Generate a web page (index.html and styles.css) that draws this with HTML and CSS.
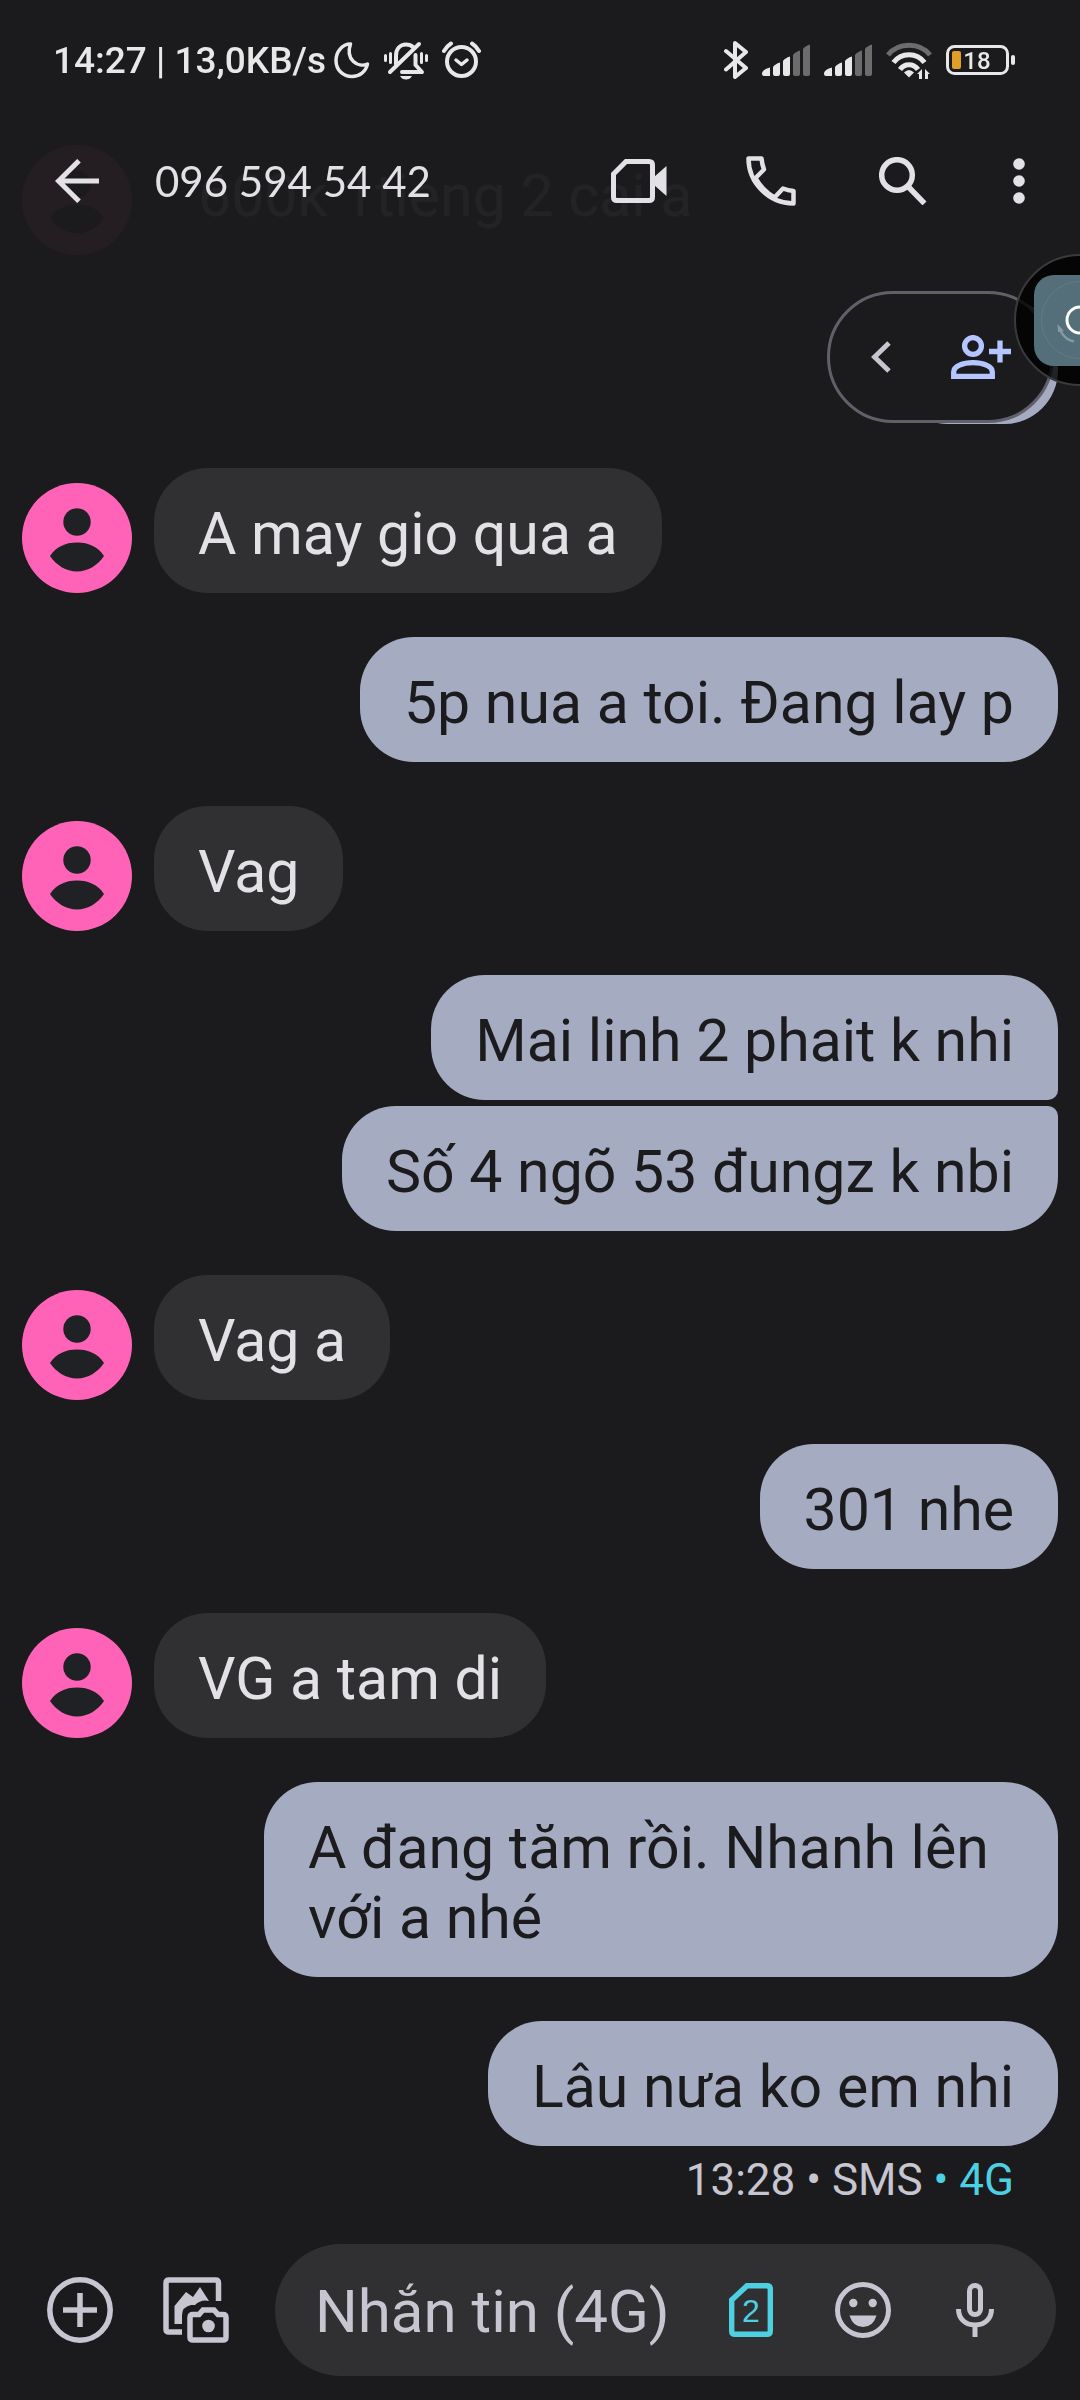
FILE: index.html
```html
<!DOCTYPE html>
<html lang="vi">
<head>
<meta charset="utf-8">
<meta name="viewport" content="width=device-width, initial-scale=1">
<title>096 594 54 42</title>
<link rel="stylesheet" href="styles.css">
</head>
<body>
<svg class="defs" aria-hidden="true">
  <symbol id="person" viewBox="0 0 110 110">
    <circle cx="55" cy="55" r="55" fill="#ff63b8"/>
    <circle cx="55" cy="39" r="13.7" fill="#202124"/>
    <path d="M28 73C34 64 43 59.500 55 59.500S76 64 82 73C76 82 66 88.500 55 88.500S34 82 28 73Z" fill="#202124"/>
  </symbol>
  <symbol id="signal" viewBox="0 0 48 40">
    <path d="M0 33q1-4 8-5.500v8.500h-6q-2 0-2-2z M11 27q2-3 7-4.500v11.500q0 2-2 2h-3q-2 0-2-2z M21 21q2-3 7-4.500v17.500q0 2-2 2h-3q-2 0-2-2z" fill="#e8e8e8"/>
    <path d="M31 15q2-3 7-4.500v23.500q0 2-2 2h-3q-2 0-2-2z M41 9q2-3 7-4.500v29.500q0 2-2 2h-3q-2 0-2-2z" fill="#6c6c6d"/>
  </symbol>
</svg>

<header class="header">
  <div class="status">
    <span class="status-text">14:27 | 13,0KB/s</span>
    <svg width="36" height="40" viewBox="0 0 36 40" fill="none" stroke="#e8e8e8" stroke-width="3.500" stroke-linejoin="round"><path d="M16.500 4C8 4 2 12 2 20.500C2 30 9 36.500 18 36.500C25.500 36.500 32 31.500 33.500 24C24 28 11 20 16.500 4Z"/></svg>
    <svg width="44" height="40" viewBox="0 0 44 40" fill="none" stroke="#e8e8e8" stroke-linecap="round"><path d="M12 24V16C12 9 16 4.500 22 4.500C25 4.500 27.500 5.500 29 7" stroke-width="4"/><path d="M31.500 15V25L38 32H18" stroke-width="4" stroke-linejoin="round"/><path d="M6 32L35 4" stroke-width="4"/><path d="M1.500 15.500v5M6.500 13.500v9M37.500 13.500v9M42.500 15.500v5" stroke-width="3"/><path d="M16 36h12q-2 3.500-6 3.500t-6-3.500z" fill="#e8e8e8" stroke="none"/></svg>
    <svg width="39" height="40" viewBox="0 0 39 40" fill="none" stroke="#e8e8e8" stroke-width="4" stroke-linecap="round" stroke-linejoin="round"><circle cx="19.500" cy="21.500" r="14.500"/><path d="M14 20l5.500 4.500L25 20" stroke-width="3.500"/><path d="M2 11Q5 6 9 3.500M30 3.500Q34 6 37 11"/></svg>
    <div class="status-right">
      <svg width="24" height="40" viewBox="0 0 24 40" fill="none" stroke="#e8e8e8" stroke-width="4" stroke-linecap="round" stroke-linejoin="round"><path d="M2 11L22 28L11 37V3L22 12L2 29.500"/></svg>
      <svg width="48" height="40"><use href="#signal"/></svg>
      <svg width="48" height="40"><use href="#signal"/></svg>
      <svg width="46" height="40" viewBox="0 0 46 40" fill="none" stroke-width="5"><path d="M2 15C12 2 34 2 44 15" stroke="#6c6c6d"/><path d="M7.500 22.500C15 12 31 12 38.500 22.500M14 29.500C18.500 23 27.500 23 32 29.500" stroke="#e8e8e8"/><path d="M23 37.500l-5-5q5-5 10 0z" fill="#e8e8e8"/><path d="M31 34l5-5v10h-3v-5zM39 29l5 5h-2v5h-3z" fill="#e8e8e8"/></svg>
      <svg width="69" height="40" viewBox="0 0 69 40"><rect x="1.500" y="6.500" width="60" height="27" rx="7" fill="none" stroke="#e8e8e8" stroke-width="3"/><rect x="6" y="11" width="9" height="18" rx="2" fill="#e09d28"/><rect x="65" y="15" width="4" height="10" rx="2" fill="#e8e8e8"/><text class="battery-text" x="31" y="29" text-anchor="middle">18</text></svg>
    </div>
  </div>
  <div class="appbar">
    <button class="icon-button back" type="button" aria-label="Quay lại"><svg width="44" height="44" viewBox="0 0 44 44" fill="none" stroke="#e4e1e6" stroke-width="5"><path d="M24 1.700L3.500 22L24 42.300M3 22H44"/></svg></button>
    <h1 class="title">096 594 54 42</h1>
    <nav class="actions" aria-label="Tác vụ">
      <button class="icon-button" type="button" aria-label="Gọi video"><svg width="56" height="44" viewBox="0 0 56 44"><path d="M15 2.500H38q3.500 0 3.500 3.500V38q0 3.500-3.500 3.500H6q-3.500 0-3.500-3.500V15Z" fill="none" stroke="#e4e1e6" stroke-width="5"/><path d="M43 18L55.500 7V37L43 26Z" fill="#e4e1e6"/></svg></button>
      <button class="icon-button" type="button" aria-label="Gọi điện"><svg width="50" height="50" viewBox="0 0 50 50" fill="none" stroke="#e4e1e6" stroke-width="4.500" stroke-linejoin="round"><path d="M2.500 2.500H15.500Q16 8 18 13.500L9.500 22Q16 34 28.500 41.500L37 32.500Q42 34.500 47.500 35V47.500C23 47.500 2.500 27 2.500 2.500Z"/></svg></button>
      <button class="icon-button" type="button" aria-label="Tìm kiếm"><svg width="48" height="48" viewBox="0 0 48 48" fill="none" stroke="#e4e1e6" stroke-width="5.500"><circle cx="18" cy="18" r="15.300"/><path d="M29.500 30L45.500 46.500"/></svg></button>
      <button class="icon-button menu" type="button" aria-label="Tùy chọn khác"><svg width="12" height="48" viewBox="0 0 12 48" fill="#e4e1e6"><circle cx="6" cy="7" r="5.800"/><circle cx="6" cy="24" r="5.800"/><circle cx="6" cy="41" r="5.800"/></svg></button>
    </nav>
  </div>
</header>

<main class="thread">
  <div class="message in faded"><svg class="avatar"><use href="#person"/></svg><p class="bubble">600k 1tieng 2 cai a</p></div>
  <div class="message out"><p class="bubble blank"></p></div>
  <div class="message in"><svg class="avatar"><use href="#person"/></svg><p class="bubble">A may gio qua a</p></div>
  <div class="message out"><p class="bubble">5p nua a toi. Đang lay p</p></div>
  <div class="message in"><svg class="avatar"><use href="#person"/></svg><p class="bubble">Vag</p></div>
  <div class="group">
    <div class="message out"><p class="bubble first">Mai linh 2 phait k nhi</p></div>
    <div class="message out"><p class="bubble last">Số 4 ngõ 53 đungz k nbi</p></div>
  </div>
  <div class="message in"><svg class="avatar"><use href="#person"/></svg><p class="bubble">Vag a</p></div>
  <div class="message out"><p class="bubble">301 nhe</p></div>
  <div class="message in"><svg class="avatar"><use href="#person"/></svg><p class="bubble">VG a tam di</p></div>
  <div class="message out"><p class="bubble wide">A đang tăm rồi. Nhanh lên với a nhé</p></div>
  <div class="message out sent">
    <p class="bubble">Lâu nưa ko em nhi</p>
    <p class="meta">13:28 • SMS <span class="sim">• 4G</span></p>
  </div>
</main>

<form class="composer">
  <button class="tool" type="button" aria-label="Thêm"><svg width="66" height="66" viewBox="0 0 66 66" fill="none" stroke="#c7c5d0" stroke-width="5.500"><circle cx="33" cy="33" r="30.200"/><path d="M33 16V50M16 33H50"/></svg></button>
  <button class="tool" type="button" aria-label="Ảnh"><svg width="66" height="66" viewBox="0 0 66 66"><path d="M55.500 24V6q0-3-3-3H6q-3 0-3 3V52q0 3 3 3H19" fill="none" stroke="#c7c5d0" stroke-width="5.500"/><path d="M11.500 47V29L23 15L30 20L37 10L46 24Q38 22 32 28H28Q19 30 19 38V47Z" fill="#c7c5d0"/><path d="M30 37.500h6l4-4.500h11l4 4.500h5q3 0 3 3V60q0 3-3 3H30q-3 0-3-3V40.500q0-3 3-3z" fill="none" stroke="#c7c5d0" stroke-width="5.500"/><circle cx="45.500" cy="49" r="6.300" fill="#c7c5d0"/></svg></button>
  <div class="field">
    <input class="input" type="text" placeholder="Nhắn tin (4G)" aria-label="Nhắn tin (4G)">
    <button class="field-button" type="button" aria-label="SIM 2"><svg width="44" height="54" viewBox="0 0 44 54"><path d="M18 2.700H38q3.300 0 3.300 3.300V48q0 3.300-3.300 3.300H6q-3.300 0-3.300-3.300V17Z" fill="none" stroke="#4dd0e1" stroke-width="5.400"/><text class="sim-number" x="22" y="39" text-anchor="middle">2</text></svg></button>
    <button class="field-button" type="button" aria-label="Biểu tượng cảm xúc"><svg width="56" height="56" viewBox="0 0 56 56" fill="#c7c5d0"><circle cx="28" cy="28" r="25.500" fill="none" stroke="#c7c5d0" stroke-width="5"/><circle cx="18.300" cy="21" r="4.200"/><circle cx="37.700" cy="21" r="4.200"/><path d="M14.500 33.500h27q-3.500 11.500-13.500 11.500t-13.500-11.500z"/></svg></button>
    <button class="field-button" type="button" aria-label="Ghi âm"><svg width="38" height="54" viewBox="0 0 38 54" fill="none" stroke="#c7c5d0" stroke-width="5"><rect x="13.500" y="2.500" width="11" height="29" rx="5.500"/><path d="M2.500 26C2.500 36 9.500 42 19 42S35.500 36 35.500 26M19 42V54"/></svg></button>
  </div>
</form>

<div class="add-contact">
  <button class="pill-button" type="button" aria-label="Thu gọn"><svg width="20" height="32" viewBox="0 0 20 32" fill="none" stroke="#c7c5d0" stroke-width="5"><path d="M18 2L3.500 16L18 30"/></svg></button>
  <button class="pill-button" type="button" aria-label="Thêm người liên hệ"><svg width="60" height="44" viewBox="0 0 60 44"><g fill="none" stroke="#b4c5ff" stroke-width="5.300"><circle cx="22" cy="11" r="8.400"/><path d="M2.700 41.300V37C2.700 31 12 27.700 22 27.700S41.300 31 41.300 37V41.300Z"/><path d="M49 5.500V27.500M38 16.500H60"/></g></svg></button>
</div>

<button class="floating" type="button" aria-label="Nút nổi">
  <svg width="66" height="132" viewBox="0 0 66 132"><circle cx="66" cy="66" r="65" fill="#000" fill-opacity=".8" stroke="#3a3a3c" stroke-width="2"/><rect x="20" y="21" width="92" height="91" rx="20" fill="#546e7a"/><circle cx="66" cy="66" r="38.500" fill="none" stroke="#627b86"/><circle cx="66" cy="66" r="13" fill="none" stroke="#fff" stroke-width="3"/><path d="M46 76Q51 86 60 87.500" fill="none" stroke="#879aa3" stroke-width="2.500"/><path d="M43.500 70L50 77L44 78Z" fill="#879aa3"/></svg>
</button>
</body>
</html>
```
FILE: styles.css
```css
* {
  box-sizing: border-box;
}

body {
  display: flex;
  flex-direction: column;
  min-height: 100vh;
  margin: 0;
  background: #1b1b1d;
  color: #e4e1e6;
  font-family: Roboto, "Noto Sans", sans-serif;
}

button {
  display: flex;
  flex: none;
  align-items: center;
  justify-content: center;
  padding: 0;
  border: 0;
  background: none;
}

p,
h1 {
  margin: 0;
}

svg {
  flex: none;
}

.defs {
  position: absolute;
  width: 0;
  height: 0;
}

/* Status bar and app bar lie over the scrolling thread */
.header {
  position: fixed;
  z-index: 1;
  top: 0;
  left: 0;
  right: 0;
}

.status {
  display: flex;
  align-items: center;
  gap: 14px;
  height: 120px;
  padding: 0 65px 0 53px;
  color: #e8e8e8;
}

.status-text {
  margin-right: -6px;
  padding-top: 2px;
  font-size: 37px;
  font-weight: 500;
  line-height: 40px;
  white-space: nowrap;
}

.status-right {
  display: flex;
  gap: 14px;
  margin-left: auto;
}

.battery-text {
  fill: #e8e8e8;
  font-size: 24px;
  font-weight: 500;
}

.appbar {
  display: flex;
  align-items: center;
  gap: 32px;
  height: 122px;
  padding: 0 29px 0 31px;
}

.icon-button {
  width: 96px;
  height: 96px;
}

.back {
  width: 92px;
}

.menu {
  width: 64px;
}

.title {
  flex: 1;
  font-family: Lato, Roboto, sans-serif;
  font-size: 42px;
  font-weight: 400;
  line-height: 56px;
  white-space: nowrap;
}

.actions {
  display: flex;
  gap: 36px;
}

.thread {
  display: flex;
  flex: 1;
  flex-direction: column;
  gap: 44px;
  padding: 130px 22px 0;
}

.group {
  display: flex;
  flex-direction: column;
  gap: 6px;
}

.message {
  display: flex;
  align-items: flex-end;
  gap: 22px;
}

.out {
  justify-content: flex-end;
}

.faded {
  opacity: 0.04;
}

.avatar {
  width: 110px;
  height: 110px;
}

.bubble {
  max-width: 794px;
  min-height: 125px;
  padding: 31px 44px 24px;
  border-radius: 54px;
  background: #303032;
  font-size: 59px;
  line-height: 70px;
}

.out .bubble {
  background: #a5abc1;
  color: #1b1b1d;
}

.out .first {
  border-bottom-right-radius: 10px;
}

.out .last {
  border-top-right-radius: 10px;
}

.blank {
  width: 164px;
}

.sent {
  flex-direction: column;
  gap: 8px;
}

.meta {
  padding-right: 44px;
  color: #c7c5d0;
  font-size: 44px;
  line-height: 52px;
}

.sim {
  color: #4dd0e1;
}

.composer {
  display: flex;
  align-items: center;
  gap: 42px;
  padding: 24px 24px 24px 43px;
}

.tool {
  width: 74px;
  height: 96px;
}

.field {
  display: flex;
  flex: 1;
  align-items: center;
  gap: 32px;
  min-width: 0;
  height: 132px;
  padding: 0 41px 0 40px;
  border-radius: 66px;
  background: #303032;
}

.input {
  flex: 1;
  width: 0;
  min-width: 0;
  margin-right: -32px;
  padding: 4px 0 0;
  border: 0;
  outline: 0;
  background: none;
  color: #e4e1e6;
  font-family: inherit;
  font-size: 60px;
  line-height: 76px;
}

.input::placeholder {
  color: #c7c5d0;
  opacity: 1;
}

.field-button {
  width: 80px;
  height: 96px;
}

.sim-number {
  fill: #4dd0e1;
  font-size: 32px;
}

/* Overlays */
.add-contact {
  position: fixed;
  top: 291px;
  right: 26px;
  display: flex;
  align-items: center;
  gap: 20px;
  height: 132px;
  padding: 0 30px 0 11px;
  border: 3px solid #5f6069;
  border-radius: 66px;
  background: #1b1b1d;
}

.pill-button {
  width: 80px;
  height: 80px;
}

.floating {
  position: fixed;
  z-index: 2;
  top: 254px;
  right: 0;
}
```
